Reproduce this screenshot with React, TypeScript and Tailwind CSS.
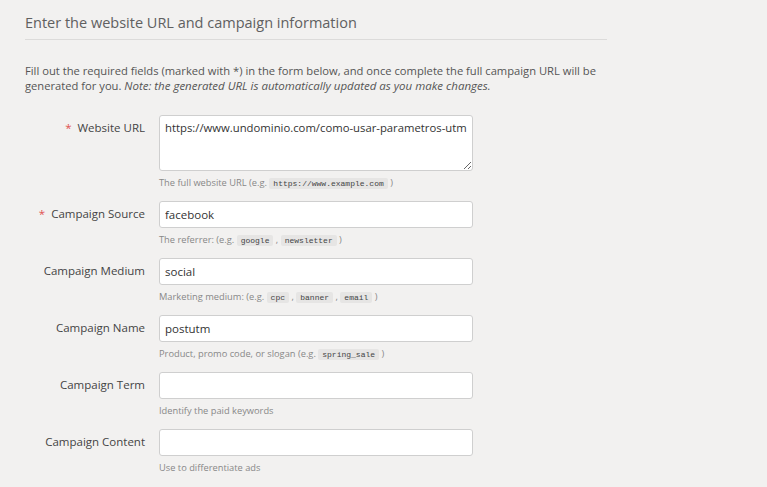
import React from "react";

const font = { fontFamily: '"Open Sans", "Noto Sans", sans-serif' };

function Code({ children }: { children: React.ReactNode }) {
  return (
    <code className="rounded-[2px] bg-[#e6e5e4] px-[4px] py-[1px] font-['Liberation_Mono',monospace] text-[8px] text-[#444]">
      {children}
    </code>
  );
}

type Row = {
  label: string;
  required?: boolean;
  value: string;
  textarea?: boolean;
  help: React.ReactNode;
};

const rows: Row[] = [
  {
    label: "Website URL",
    required: true,
    value: "https://www.undominio.com/como-usar-parametros-utm",
    textarea: true,
    help: (
      <>
        The full website URL (e.g. <Code>https://www.example.com</Code> )
      </>
    ),
  },
  {
    label: "Campaign Source",
    required: true,
    value: "facebook",
    help: (
      <>
        The referrer: (e.g. <Code>google</Code> , <Code>newsletter</Code> )
      </>
    ),
  },
  {
    label: "Campaign Medium",
    value: "social",
    help: (
      <>
        Marketing medium: (e.g. <Code>cpc</Code> , <Code>banner</Code> , <Code>email</Code> )
      </>
    ),
  },
  {
    label: "Campaign Name",
    value: "postutm",
    help: (
      <>
        Product, promo code, or slogan (e.g. <Code>spring_sale</Code> )
      </>
    ),
  },
  { label: "Campaign Term", value: "", help: <>Identify the paid keywords</> },
  { label: "Campaign Content", value: "", help: <>Use to differentiate ads</> },
];

export default function App() {
  return (
    <div className="h-[487px] w-full overflow-hidden bg-[#f2f1f0] pl-[25px]" style={font}>
      <div className="w-[582px]">
        <h2 className="border-b border-[#dcdbda] pb-[8px] pt-[14px] text-[14.5px] leading-[17px] text-[#606060]">
          Enter the website URL and campaign information
        </h2>
        <p className="mt-[23px] w-[620px] whitespace-nowrap text-[11.2px] leading-[15px] text-[#555]">
          Fill out the required fields (marked with *) in the form below, and once complete the full campaign URL will be
          <br />
          generated for you. <em className="text-[11.5px]">Note: the generated URL is automatically updated as you make changes.</em>
        </p>
        <div className="mt-[22px] flex flex-col">
          {rows.map((r) => (
            <div key={r.label} className="mb-[11px] flex items-start">
              <label className="flex w-[120px] justify-end pt-[4px] text-[11.5px] leading-[18px] text-[#444]">
                {r.required && <span className="mr-[6px] text-[#e05252]">*</span>}
                {r.label}
              </label>
              <div className="ml-[14px] flex w-[314px] flex-col">
                {r.textarea ? (
                  <textarea
                    readOnly
                    value={r.value}
                    className="block h-[56px] w-[314px] resize-y rounded-[3px] border border-[#cfcfcf] bg-white px-[5px] py-[3px] text-[11.3px] leading-[18px] text-[#333] outline-none"
                  />
                ) : (
                  <input
                    readOnly
                    value={r.value}
                    className="block h-[27px] w-[314px] rounded-[3px] border border-[#cfcfcf] bg-white px-[5px] text-[11.5px] text-[#333] outline-none"
                  />
                )}
                <div className="mt-[5px] h-[14px] whitespace-nowrap text-[9.3px] leading-[14px] text-[#888]">{r.help}</div>
              </div>
            </div>
          ))}
        </div>
      </div>
    </div>
  );
}
